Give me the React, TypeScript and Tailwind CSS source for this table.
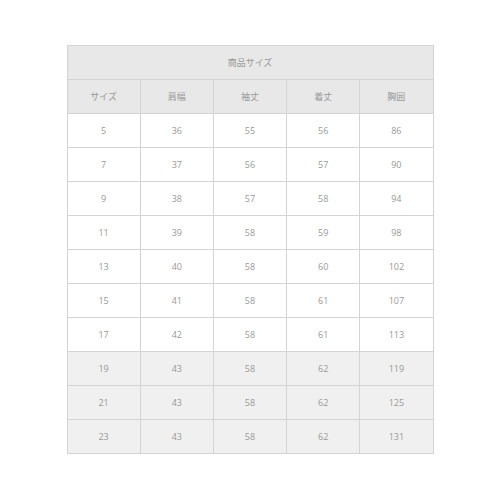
import React from 'react';

const headers = ['サイズ', '肩幅', '袖丈', '着丈', '胸囲'];

const rows: { cells: number[]; shaded?: boolean }[] = [
  { cells: [5, 36, 55, 56, 86] },
  { cells: [7, 37, 56, 57, 90] },
  { cells: [9, 38, 57, 58, 94] },
  { cells: [11, 39, 58, 59, 98] },
  { cells: [13, 40, 58, 60, 102] },
  { cells: [15, 41, 58, 61, 107] },
  { cells: [17, 42, 58, 61, 113] },
  { cells: [19, 43, 58, 62, 119], shaded: true },
  { cells: [21, 43, 58, 62, 125], shaded: true },
  { cells: [23, 43, 58, 62, 131], shaded: true },
];

export default function App() {
  return (
    <div
      className="w-[500px] h-[500px] bg-white pt-[45px]"
      style={{ fontFamily: '"Open Sans", "Noto Sans CJK JP", sans-serif' }}
    >
      <table className="mx-auto w-[367px] table-fixed border-collapse text-[9px] text-[#999999]">
        <thead>
          <tr>
            <th colSpan={5} className="h-[34px] border border-[#d4d4d4] bg-[#e8e8e8] font-normal">
              商品サイズ
            </th>
          </tr>
          <tr>
            {headers.map((h) => (
              <th key={h} className="h-[34px] border border-[#d4d4d4] bg-[#e8e8e8] font-normal">
                {h}
              </th>
            ))}
          </tr>
        </thead>
        <tbody>
          {rows.map((r) => (
            <tr key={r.cells[0]} className={r.shaded ? 'bg-[#f0f0f0]' : 'bg-white'}>
              {r.cells.map((c, i) => (
                <td key={i} className="h-[34px] border border-[#d4d4d4] text-center">
                  {c}
                </td>
              ))}
            </tr>
          ))}
        </tbody>
      </table>
    </div>
  );
}
